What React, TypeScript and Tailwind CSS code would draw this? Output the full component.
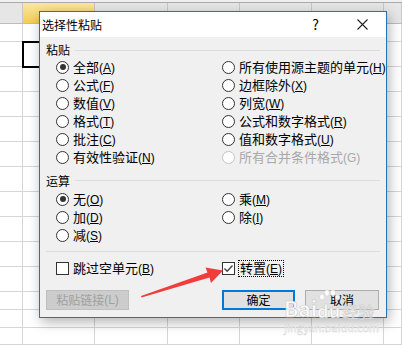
const cols = [
  "w-[23px]",
  "w-[72px]",
  "w-[73px]",
  "w-[72px]",
  "w-[72px]",
  "w-[72px]",
  "flex-1",
];

const rows = [
  "h-[18px]",
  "h-[25px]",
  "h-[25px]",
  "h-[25px]",
  "h-[25px]",
  "h-[25px]",
  "h-[25px]",
  "h-[25px]",
  "h-[25px]",
  "h-[25px]",
  "h-[25px]",
  "h-[18px]",
  "h-[18px]",
  "h-[17px]",
];

const Key = ({ k, u = true }: { k: string; u?: boolean }) => (
  <span className="font-['Liberation_Sans',sans-serif] text-[12px]">
    (<span className={u ? "underline underline-offset-[1px]" : ""}>{k}</span>)
  </span>
);

const Radio = ({
  label,
  k,
  checked,
  disabled,
}: {
  label: string;
  k: string;
  checked?: boolean;
  disabled?: boolean;
}) => (
  <div className="flex h-[18px] items-center gap-[4px] whitespace-nowrap">
    <span
      className={`flex h-[13px] w-[13px] shrink-0 items-center justify-center rounded-full border bg-white ${
        disabled ? "border-[#c4c4c4]" : "border-[#333]"
      }`}
    >
      {checked && <span className="h-[6px] w-[6px] rounded-full bg-[#333]" />}
    </span>
    <span className={`text-[13px] ${disabled ? "text-[#a8a8a8]" : "text-black"}`}>
      {label}
      <Key k={k} u={!disabled} />
    </span>
  </div>
);

const GroupHead = ({ label, cls }: { label: string; cls: string }) => (
  <div className={`flex items-center ${cls}`}>
    <span className="text-[12px] leading-none">{label}</span>
    <div className="ml-[5px] h-px flex-1 bg-[#dcdcdc]" />
  </div>
);

const App = () => {
  return (
    <div className="relative h-[345px] w-[402px] overflow-hidden bg-white font-['Noto_Sans_CJK_SC','Liberation_Sans',sans-serif]">
      {/* spreadsheet */}
      <div className="h-[2px] bg-[#f0f0f0]" />
      <div className="h-px bg-[#ababab]" />
      <div className="flex h-[21px] border-b border-[#bdbdbd] bg-[#e6e6e6]">
        {cols.map((c, i) => (
          <div
            key={i}
            className={`${c} border-r border-[#c8c8c8] ${
              i === 1 ? "bg-gradient-to-b from-[#fbe7a0] to-[#f4cd58]" : ""
            }`}
          />
        ))}
      </div>
      {rows.map((r, ri) => (
        <div key={ri} className={`flex ${r}`}>
          {cols.map((c, ci) => (
            <div key={ci} className={`${c} border-b border-r border-[#d6d6d6]`} />
          ))}
        </div>
      ))}

      {/* selected cell */}
      <div className="absolute left-[22px] top-[41px] h-[27px] w-[75px] border-2 border-black" />

      {/* dialog */}
      <div className="absolute left-[39px] top-[11px] flex h-[307px] w-[348px] flex-col border border-[#2275b5] bg-[#f0f0f0] shadow-[2px_4px_12px_rgba(0,0,0,0.3)]">
        <div className="flex h-[25px] items-center bg-white pl-[2px] text-[12px] text-black">
          <span className="flex-1">选择性粘贴</span>
          <span className="mr-[38px] text-[14px]">?</span>
          <svg width="11" height="11" viewBox="0 0 11 11" className="mr-[18px]">
            <path d="M0.5 0.5 L10.5 10.5 M10.5 0.5 L0.5 10.5" stroke="#222" strokeWidth="1.1" />
          </svg>
        </div>

        <div className="flex flex-1 flex-col px-[6px] text-black">
          <GroupHead label="粘贴" cls="mt-[5px] h-[16px]" />
          <div className="ml-[10px] grid grid-cols-[166px_1fr]">
            <Radio label="全部" k="A" checked />
            <Radio label="所有使用源主题的单元" k="H" />
            <Radio label="公式" k="F" />
            <Radio label="边框除外" k="X" />
            <Radio label="数值" k="V" />
            <Radio label="列宽" k="W" />
            <Radio label="格式" k="T" />
            <Radio label="公式和数字格式" k="R" />
            <Radio label="批注" k="C" />
            <Radio label="值和数字格式" k="U" />
            <Radio label="有效性验证" k="N" />
            <Radio label="所有合并条件格式" k="G" disabled />
          </div>

          <GroupHead label="运算" cls="mt-[6px] h-[17px]" />
          <div className="ml-[10px] mt-[1px] grid grid-cols-[166px_1fr]">
            <Radio label="无" k="O" checked />
            <Radio label="乘" k="M" />
            <Radio label="加" k="D" />
            <Radio label="除" k="I" />
            <Radio label="减" k="S" />
          </div>

          <div className="mt-[7px] h-px bg-[#dcdcdc]" />

          <div className="ml-[10px] mt-[6px] grid h-[16px] grid-cols-[166px_1fr] items-center whitespace-nowrap">
            <div className="flex items-center gap-[4px]">
              <span className="h-[13px] w-[13px] border border-[#333] bg-white" />
              <span className="text-[13px]">
                跳过空单元
                <Key k="B" />
              </span>
            </div>
            <div className="flex items-center gap-[3px]">
              <span className="flex h-[13px] w-[13px] items-center justify-center border border-[#333] bg-white">
                <svg width="11" height="11" viewBox="0 0 11 11">
                  <path d="M1.5 5.5 L4.2 8.3 L9.5 2.5" fill="none" stroke="#444" strokeWidth="1.4" />
                </svg>
              </span>
              <span className="border border-dotted border-black px-[1px] text-[13px] leading-[14px]">
                转置
                <Key k="E" />
              </span>
            </div>
          </div>

          <div className="mt-[16px] flex h-[20px] whitespace-nowrap">
            <div className="flex w-[83px] items-center justify-center border border-[#bfbfbf] bg-[#cccccc] text-[12px] text-[#a0a0a0]">
              粘贴链接<Key k="L" u={false} />
            </div>
            <div className="ml-[93px] flex w-[73px] items-center justify-center border-2 border-[#0078d7] bg-[#e1e1e1] text-[12px]">
              确定
            </div>
            <div className="ml-[10px] flex w-[74px] items-center justify-center border border-[#adadad] bg-[#e1e1e1] text-[12px]">
              取消
            </div>
          </div>
        </div>
      </div>

      {/* red arrow */}
      <svg className="pointer-events-none absolute left-0 top-0" width="402" height="345">
        <polygon
          points="141,296 207.5,272.5 205.5,267.5 223,270.5 211,283 209.5,277.5 141.5,297.5"
          fill="#f23c3c"
        />
      </svg>

      {/* watermark */}
      <div className="pointer-events-none absolute left-[284px] top-[289px] flex flex-col items-start opacity-90">
        <div className="flex items-end leading-none">
          <span className="text-[21px] font-bold text-white [-webkit-text-stroke:0.6px_#c8c8c8]">
            Bai
          </span>
          <span className="relative flex flex-col items-center">
            <svg width="22" height="12" viewBox="0 0 22 12">
              <ellipse cx="4" cy="8" rx="2.5" ry="3" fill="#fff" stroke="#ccc" strokeWidth="0.6" />
              <ellipse cx="9" cy="4" rx="2.5" ry="3.2" fill="#fff" stroke="#ccc" strokeWidth="0.6" />
              <ellipse cx="15" cy="4" rx="2.5" ry="3.2" fill="#fff" stroke="#ccc" strokeWidth="0.6" />
              <ellipse cx="19.5" cy="8" rx="2.2" ry="3" fill="#fff" stroke="#ccc" strokeWidth="0.6" />
            </svg>
            <span className="text-[18px] font-bold text-white [-webkit-text-stroke:0.6px_#c8c8c8]">
              du
            </span>
          </span>
          <span className="ml-[2px] text-[16px] text-white [-webkit-text-stroke:0.6px_#c8c8c8]">
            经验
          </span>
        </div>
        <span className="mt-[3px] text-[11px] leading-none text-white [-webkit-text-stroke:0.4px_#cfcfcf]">
          jingyan.baidu.com
        </span>
      </div>
    </div>
  );
};

export default App;
